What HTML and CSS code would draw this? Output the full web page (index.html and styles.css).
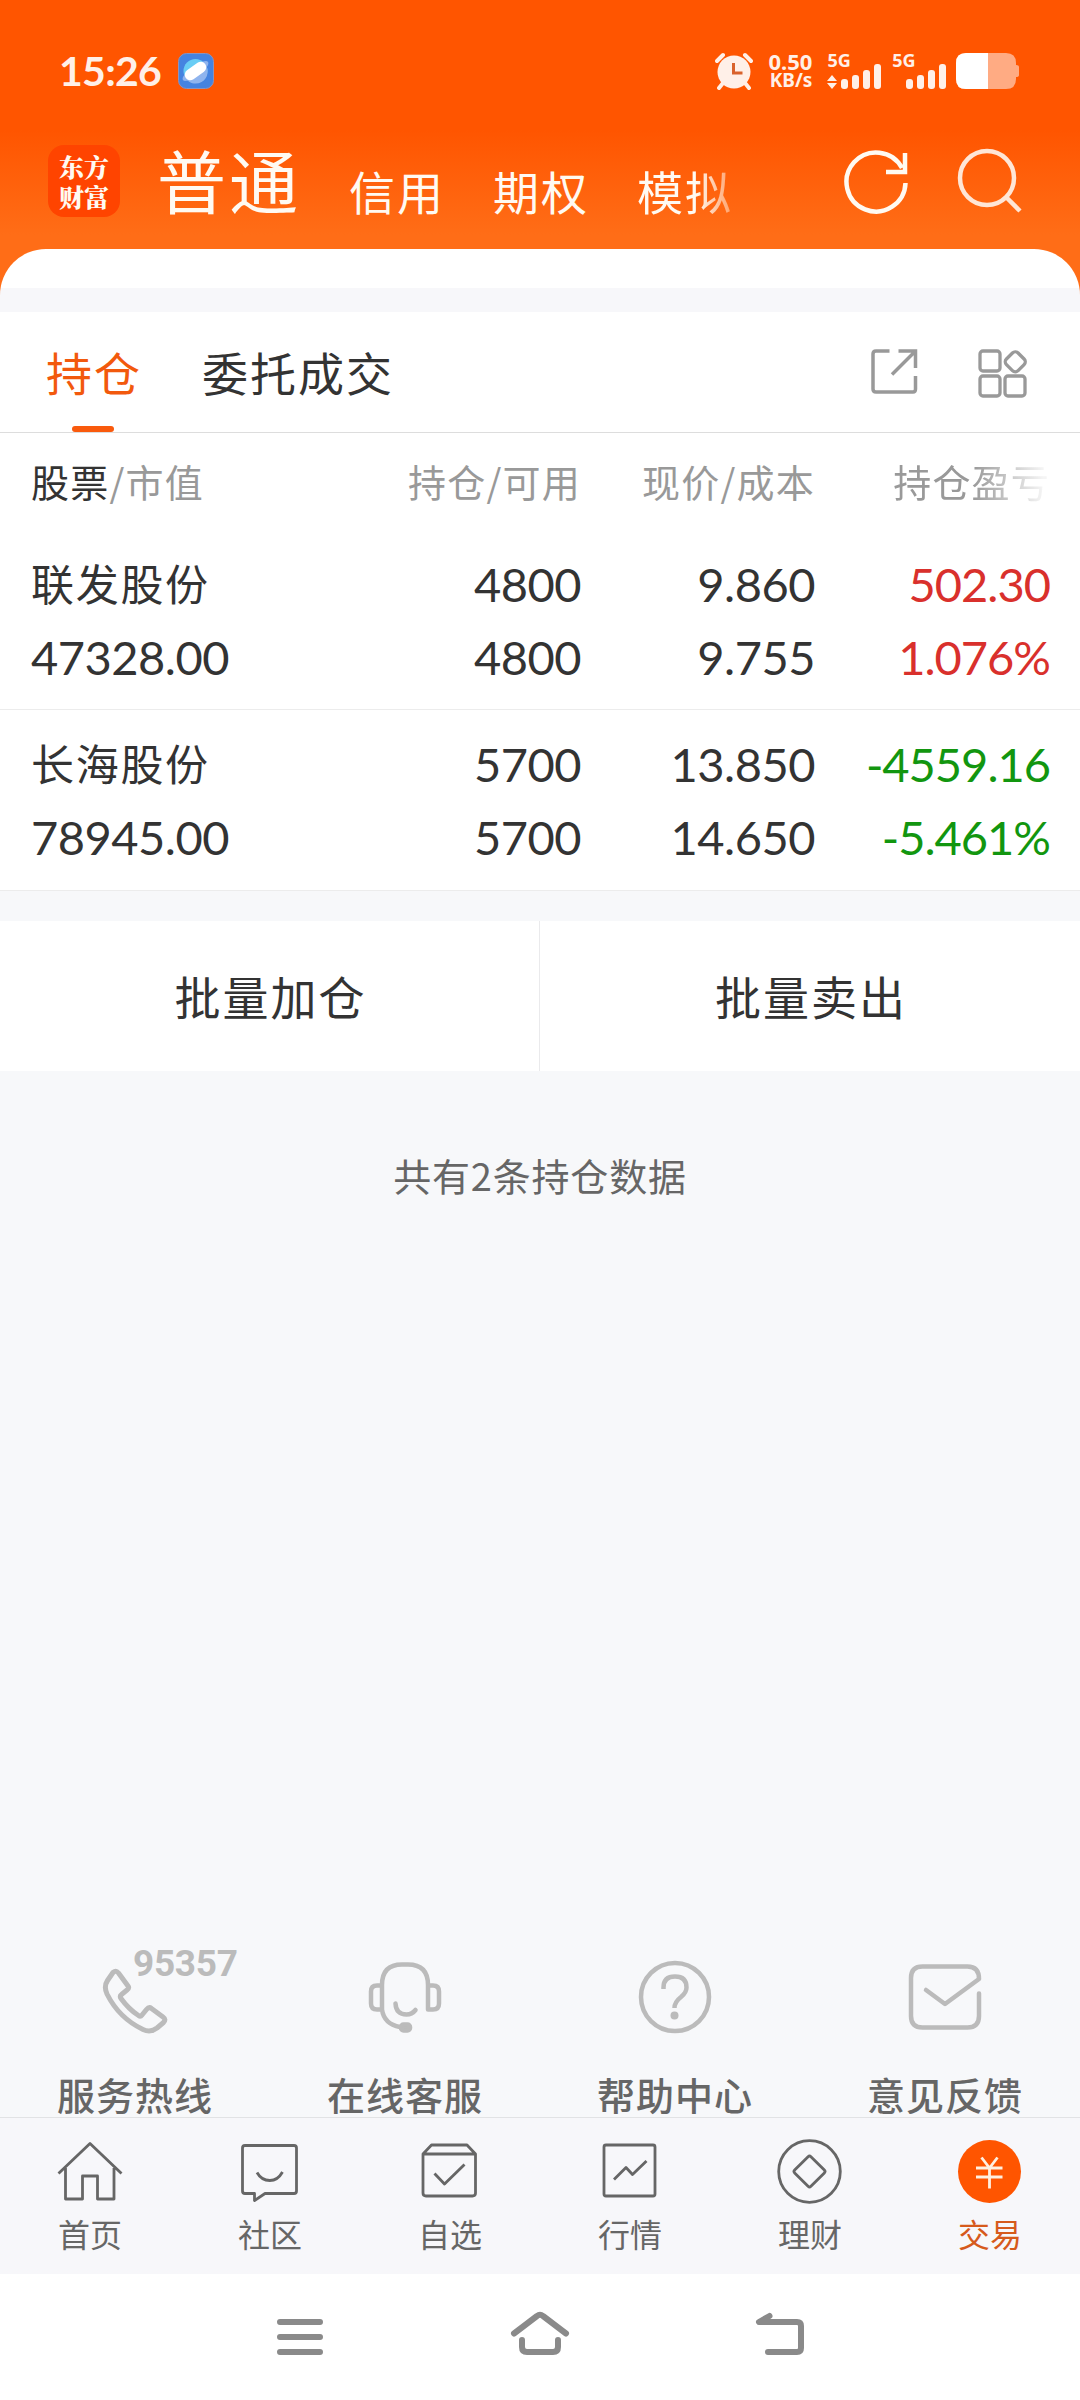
FILE: index.html
```html
<!DOCTYPE html>
<html lang="zh-CN">
<head>
<meta charset="utf-8">
<title>持仓</title>
<link rel="stylesheet" href="styles.css">
</head>
<body>
<div class="screen">
  <header class="top">
    <div class="status">
      <span class="clock">15:26</span>
      <svg class="app-badge" width="36" height="36" viewBox="0 0 36 36"><rect x="0.5" y="0.5" width="35" height="35" rx="8" fill="#4583e0" stroke="#8b93bd"/><circle cx="17.500" cy="18" r="12" fill="#69cdf5"/><path d="M7 24.500A12 12 0 0 0 28 12.500Z" fill="#8fb4ee"/><ellipse cx="17.500" cy="18" rx="15.500" ry="5" transform="rotate(-36 17.500 18)" fill="#8fb4ee"/><rect x="5.500" y="12.500" width="24" height="11" rx="5.500" transform="rotate(-36 17.500 18)" fill="#fff"/></svg>
      <svg class="alarm" width="38" height="38" viewBox="0 0 38 38"><path d="M2 9 8 3M30 3l6 6M8 31l-4 5M30 31l4 5" stroke="#fff0e8" stroke-width="4" stroke-linecap="round"/><circle cx="19" cy="20" r="16.500" fill="#fff0e8"/><path d="M18.500 11v10h9" fill="none" stroke="#d9622c" stroke-width="3"/></svg>
      <div class="speed"><span class="speed-value">0.50</span><span>KB/s</span></div>
      <div class="signal">
        <span class="net">5G</span>
        <svg width="56" height="26" viewBox="0 0 56 26"><g fill="#fff0e8"><path d="M5 12l5 6H0zM5 26l5-6H0z"/><rect x="14" y="16" width="7" height="10" rx="3"/><rect x="25" y="12" width="7" height="14" rx="3"/><rect x="36" y="7" width="7" height="19" rx="3"/><rect x="47" y="1" width="7" height="25" rx="3"/></g></svg>
      </div>
      <div class="signal">
        <span class="net">5G</span>
        <svg width="56" height="26" viewBox="0 0 56 26"><g fill="#fff0e8"><rect x="14" y="16" width="7" height="10" rx="3"/><rect x="25" y="12" width="7" height="14" rx="3"/><rect x="36" y="7" width="7" height="19" rx="3"/><rect x="47" y="1" width="7" height="25" rx="3"/></g></svg>
      </div>
      <svg class="battery" width="64" height="36" viewBox="0 0 64 36"><path d="M10 0h40q10 0 10 10v2q3 0 3 2v8q0 2-3 2v2q0 10-10 10H10Q0 36 0 26V10Q0 0 10 0Z" fill="#ffab83"/><path d="M10 0h22v36H10Q0 36 0 26V10Q0 0 10 0Z" fill="#fff"/></svg>
    </div>
    <div class="modes">
      <div class="logo"><span>东方</span><span>财富</span></div>
      <span class="mode current">普通</span>
      <span class="mode">信用</span>
      <span class="mode">期权</span>
      <span class="mode fading">模拟</span>
      <svg class="refresh" width="70" height="70" viewBox="0 0 70 70" fill="none" stroke="#fffaf2" stroke-width="4.500"><path d="M64.500 36A29.500 29.500 0 1 1 61 21M64 6v19H45"/></svg>
      <svg class="search" width="70" height="70" viewBox="0 0 70 70" fill="none" stroke="#ffe6d6" stroke-width="4.500"><circle cx="32" cy="31" r="27"/><path d="M50 49 65 64"/></svg>
    </div>
  </header>
  <div class="sheet-edge"><div class="sheet"></div></div>
  <main>
    <nav class="tabs">
      <span class="tab active">持仓</span>
      <span class="tab">委托成交</span>
      <svg class="share" width="48" height="48" viewBox="870 348 48 48" fill="none" stroke="#999" stroke-width="3.500"><path d="M889.500 351H876q-3 0-3 3v35q0 3 3 3h37q2.500 0 2.500-3v-13M898.500 351h17v17M915 351.500 892 374.500"/></svg>
      <svg class="widgets" width="50" height="50" viewBox="978 348 50 50" fill="none" stroke="#999" stroke-width="3.300"><rect x="980" y="351" width="20" height="20" rx="3"/><rect x="980" y="376" width="20" height="20" rx="3"/><rect x="1005" y="376" width="20" height="20" rx="3"/><rect x="1007" y="353.500" width="16.500" height="16.500" rx="4" transform="rotate(45 1015.200 361.800)"/></svg>
    </nav>
    <section class="holdings">
      <div class="row head">
        <span><b>股票</b>/市值</span><span>持仓/可用</span><span>现价/成本</span><span class="head-fade">持仓盈亏</span>
      </div>
      <div class="row item">
        <span class="name">联发股份</span><span>4800</span><span>9.860</span><span class="up">502.30</span>
        <span>47328.00</span><span>4800</span><span>9.755</span><span class="up">1.076%</span>
      </div>
      <div class="row item">
        <span class="name">长海股份</span><span>5700</span><span>13.850</span><span class="down">-4559.16</span>
        <span>78945.00</span><span>5700</span><span>14.650</span><span class="down">-5.461%</span>
      </div>
    </section>
    <section class="bulk"><span>批量加仓</span><span>批量卖出</span></section>
    <p class="count">共有2条持仓数据</p>
    <section class="help">
      <div class="help-item">
        <div class="help-icon">
          <svg width="270" height="90" viewBox="0 1950 270 90" fill="none" stroke="#bbb" stroke-width="5" stroke-linejoin="round"><path d="M113 1972.500Q116 1970 118.500 1973L128 1986Q129.500 1988 127 1990L121.500 1994.500Q119.500 1996 121 1998.500Q129 2009.500 138.500 2015.500Q140.500 2017 142 2015L146.500 2009.500Q149 2006.500 151.500 2008.500L163 2017Q166.500 2019.500 163.500 2022.500L157 2028Q150.500 2033 143 2029.500Q119 2018 107 1994Q103.500 1986.500 107.500 1980.500Z"/></svg>
          <span class="hotline">95357</span>
        </div>
        <span>服务热线</span>
      </div>
      <div class="help-item">
        <div class="help-icon"><svg width="270" height="90" viewBox="270 1950 270 90" fill="none" stroke="#bbb" stroke-width="4.500" stroke-linejoin="round" stroke-linecap="round"><path d="M382 1985.500h-5q-6 0-6 6v12q0 6 6 6h5V1985q0-20.500 20-20.500h6q20 0 20 20.500v24.500h5q6 0 6-6v-12q0-6-6-6h-5M382 2009.500Q384 2024 400 2027M395.500 2003.500Q396 2014.500 406.500 2014.500 412 2014.500 415.500 2010"/><rect x="401" y="2024.500" width="9" height="6" rx="2.500" fill="#bbb"/></svg></div>
        <span>在线客服</span>
      </div>
      <div class="help-item">
        <div class="help-icon"><svg width="270" height="90" viewBox="540 1950 270 90" fill="none" stroke="#bbb" stroke-width="4.500"><circle cx="675" cy="1997" r="34"/><path d="M663.500 1989v-1.500q0-11 11.500-11 11.500 0 11.500 11 0 5-5.500 9.500-6.500 5-6.500 11" stroke-width="4.500"/><circle cx="674.500" cy="2015.500" r="4" fill="#bbb" stroke="none"/></svg></div>
        <span>帮助中心</span>
      </div>
      <div class="help-item">
        <div class="help-icon"><svg width="270" height="90" viewBox="810 1950 270 90" fill="none" stroke="#bbb" stroke-width="4.500" stroke-linejoin="round" stroke-linecap="round"><path d="M979 1993.500V2016q0 11.500-11.500 11.500h-45Q911 2027.500 911 2016V1978q0-11.500 11.500-11.500h45q11.500 0 11.500 12.500L945 2004 926 1990"/></svg></div>
        <span>意见反馈</span>
      </div>
    </section>
  </main>
  <nav class="tabbar">
    <div class="dest"><svg width="70" height="70" viewBox="55 2136 70 70"><path d="M58.500 2173.500 90 2143.500 121.500 2173.500M65.500 2168v31H82.500v-23H97.500v23H114v-31"/></svg><span>首页</span></div>
    <div class="dest"><svg width="70" height="70" viewBox="235 2136 70 70"><path d="M245 2145.500h49q2.500 0 2.500 2.500v43q0 2.500-2.500 2.500h-29l-10.500 7v-7H245q-2.500 0-2.500-2.500v-43q0-2.500 2.500-2.500ZM257 2172.500q4.500 8 12.800 8 8 0 12.700-8.500"/></svg><span>社区</span></div>
    <div class="dest"><svg width="70" height="70" viewBox="415 2136 70 70"><path d="M423 2154v39q0 3 3 3h46.500q3 0 3-3v-39l-8.500-9h-35.500ZM423 2154h52.500M434.500 2173.500l10 10.500 20-19.500"/></svg><span>自选</span></div>
    <div class="dest"><svg width="70" height="70" viewBox="595 2136 70 70"><rect x="604" y="2145" width="51" height="51" rx="2"/><path d="M614 2179.500l12-12 6.500 7 14-13.500"/></svg><span>行情</span></div>
    <div class="dest"><svg width="70" height="70" viewBox="775 2136 70 70"><circle cx="809.500" cy="2171.500" r="30.800"/><rect x="798" y="2160" width="23" height="23" rx="2" transform="rotate(45 809.500 2171.500)"/></svg><span>理财</span></div>
    <div class="dest chosen"><svg width="70" height="70" viewBox="955 2136 70 70"><circle cx="989.500" cy="2171.500" r="31.500" fill="#f50" stroke="none"/><path d="M981.500 2157.500 989.500 2168l8-10.500M976 2168h26.500M976 2177h26.500M989.500 2168v20.500" stroke="#fff0e0"/></svg><span>交易</span></div>
  </nav>
  <footer class="system">
    <svg width="60" height="50" viewBox="270 2308 60 50"><path d="M280 2322h40M280 2337h40M280 2352h40"/></svg>
    <svg width="60" height="50" viewBox="510 2308 60 50"><path d="M514 2333.500 537 2316q3-2.500 6 0l23 17.500M522 2340v7q0 5 5 5h26q5 0 5-5v-7"/></svg>
    <svg width="60" height="50" viewBox="750 2308 60 50"><path d="M769.500 2316 759 2322h38q4 0 4 4v22q0 4-4 4h-29"/></svg>
  </footer>
</div>
</body>
</html>
```
FILE: styles.css
```css
* { box-sizing: border-box; }
body { margin: 0; font-family: "Noto Sans CJK SC", sans-serif; color: #333; background: #f7f8fa; }
svg { display: block; flex: none; }
.screen { width: 1080px; height: 2400px; display: flex; flex-direction: column; overflow: hidden; }

.top { height: 249px; background: linear-gradient(#ff5500 0, #ff5500 130px, #ff6d17 235px, #ff6d17 249px); color: #fffaf2; }
.status { height: 106px; padding: 53px 60px 0 59px; display: flex; align-items: flex-start; color: #fff0e8; }
.clock { width: 119px; font: 700 41px/36px Lato, sans-serif; letter-spacing: -0.700px; }
.alarm { margin-left: 501px; margin-top: -1px; }
.speed { width: 60px; margin-right: 15px; display: flex; flex-direction: column; align-items: flex-end; font: 700 19px/20px "Noto Sans", sans-serif; }
.speed-value { font-size: 22px; line-height: 17px; }
.signal { width: 65px; height: 36px; display: flex; flex-direction: column; }
.signal svg { margin-top: -4px; }
.net { font: 700 18px/14px "Noto Sans", sans-serif; }
.battery { margin-left: -1px; }
.modes { height: 143px; padding-left: 48px; display: flex; align-items: flex-start; }
.logo { width: 72px; height: 72px; margin: 39px 37px 0 0; border-radius: 16px; background: #ff4400; display: flex; flex-direction: column; justify-content: center; align-items: center; font: 900 25px/30px "Noto Serif CJK SC", "Noto Sans CJK SC", sans-serif; }
.mode { width: 144px; padding-top: 54px; font-size: 46px; line-height: 60px; letter-spacing: 2px; font-weight: 400; white-space: nowrap; }
.mode.current { width: 192px; padding-top: 33px; font-size: 69px; line-height: 80px; letter-spacing: 3px; }
.fading { width: 98px; -webkit-mask-image: linear-gradient(90deg, #000 60%, rgba(0,0,0,.35) 100%); mask-image: linear-gradient(90deg, #000 60%, rgba(0,0,0,.35) 100%); }
.refresh { margin: 41px 0 0 106px; }
.search { margin: 41px 0 0 44px; }

.sheet-edge { height: 63px; background: linear-gradient(#ff6d17 48px, #f7f7fa 48px); }
.sheet { height: 63px; border-radius: 46px 46px 0 0; background: linear-gradient(#fff 39px, #f7f7fa 39px); }

main { flex: 1; display: flex; flex-direction: column; min-height: 0; }
.tabs { height: 121px; flex: none; padding: 0 52px 0 46px; display: flex; border-bottom: 1px solid #ddd; background: #fff; }
.tab { height: 120px; margin-right: 60px; font-size: 46px; line-height: 118px; letter-spacing: 2px; position: relative; }
.tab.active { color: #f2590d; }
.tab.active::after { content: ""; position: absolute; left: 26px; bottom: 0; width: 42px; height: 6px; border-radius: 3px; background: #f95a0d; }
.share { margin: 36px 60px 0 auto; }
.widgets { margin-top: 36px; }

.holdings { flex: none; background: #fff; }
.row { display: grid; grid-template-columns: 260px 290px 234px 235px; padding: 0 30px 0 31px; }
.row > span:not(:nth-child(4n + 1)) { text-align: right; }
.head { height: 97px; font-size: 38px; line-height: 95px; letter-spacing: 1.200px; color: #999; }
.head b { font-weight: 400; color: #333; }
.head-fade { -webkit-mask-image: linear-gradient(90deg, #000 67%, rgba(0,0,0,.1) 97%); mask-image: linear-gradient(90deg, #000 67%, rgba(0,0,0,.1) 97%); }
.item { height: 181px; padding-top: 18px; grid-auto-rows: 73px; border-bottom: 1px solid #ececec; font-family: Lato, sans-serif; font-size: 47px; line-height: 73px; letter-spacing: -0.500px; }
.item:nth-child(2) { height: 180px; }
.item .name { font-family: "Noto Sans CJK SC", sans-serif; font-size: 43px; line-height: 69px; letter-spacing: 1.700px; }
.up { color: #d9302c; }
.down { color: #12960f; }
.item .down, .item .up { letter-spacing: -1px; }

.bulk { height: 150px; flex: none; margin-top: 30px; display: grid; grid-template-columns: 540px 540px; background: #fff; text-align: center; font-size: 46px; line-height: 148px; letter-spacing: 2px; }
.bulk span { padding-left: 2px; }
.bulk span:first-child { border-right: 1px solid #eaeaec; }
.count { margin: 74px 0 0; text-align: center; font-size: 38px; line-height: 60px; letter-spacing: 0.800px; color: #666; }

.help { margin-top: auto; height: 167px; flex: none; display: grid; grid-template-columns: repeat(4, 270px); }
.help-item { display: flex; flex-direction: column; align-items: center; font-size: 38px; font-weight: 500; line-height: 52px; letter-spacing: 1px; color: #666; }
.help-icon { position: relative; height: 118px; flex: none; }
.hotline { position: absolute; left: 133px; top: -3px; font: 700 37px/34px Roboto, sans-serif; letter-spacing: -0.300px; color: #bbb; }

.tabbar { height: 157px; flex: none; padding-top: 18px; display: grid; grid-template-columns: repeat(6, 180px); border-top: 1px solid #e2e3e5; background: #f7f7fa; }
.dest { display: flex; flex-direction: column; align-items: center; font-size: 32px; line-height: 54px; color: #666; }
.dest svg { fill: none; stroke: #666; stroke-width: 2.800px; stroke-linejoin: round; }
.chosen { color: #d65a1c; }
.system { height: 126px; flex: none; padding-top: 34px; display: flex; justify-content: center; gap: 180px; background: #fff; }
.system svg { fill: none; stroke: #8a8a8a; stroke-width: 6px; stroke-linecap: round; stroke-linejoin: round; }
```
